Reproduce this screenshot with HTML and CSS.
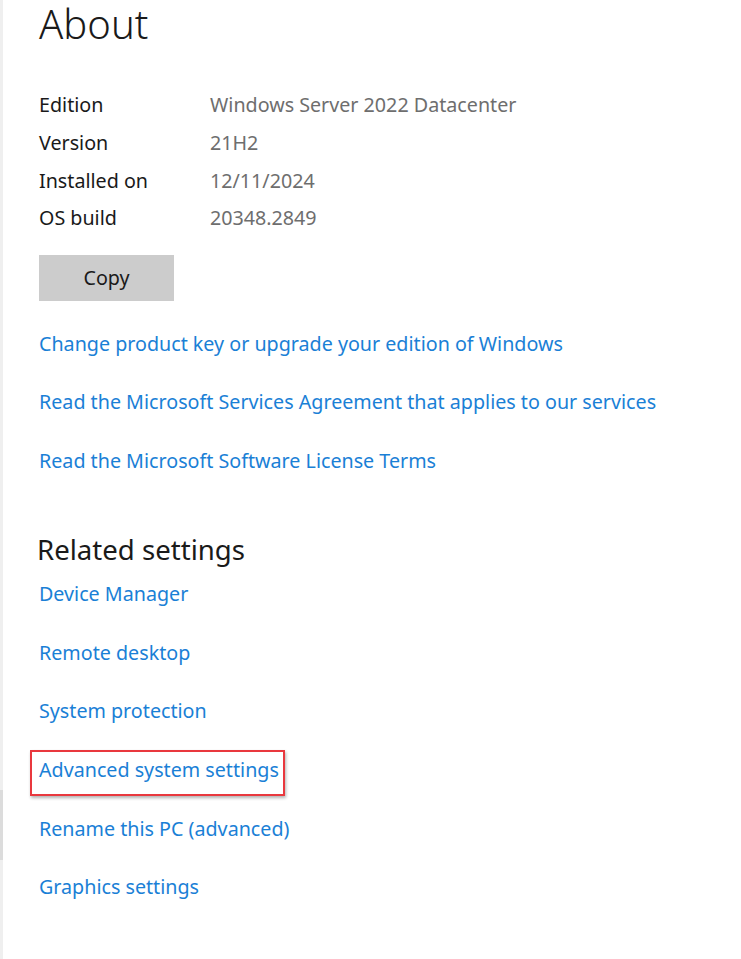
FILE: index.html
```html
<!DOCTYPE html>
<html lang="en">
<head>
<meta charset="utf-8">
<title>About</title>
<link rel="stylesheet" href="styles.css">
</head>
<body>
<div class="edge"><div class="edge-thumb"></div></div>
<main class="page">
  <h1 class="title">About</h1>
  <dl class="specs">
    <dt>Edition</dt><dd>Windows Server 2022 Datacenter</dd>
    <dt>Version</dt><dd>21H2</dd>
    <dt>Installed on</dt><dd>12/11/2024</dd>
    <dt>OS build</dt><dd>20348.2849</dd>
  </dl>
  <button class="copy">Copy</button>
  <ul class="links">
    <li><a href="#">Change product key or upgrade your edition of Windows</a></li>
    <li><a href="#">Read the Microsoft Services Agreement that applies to our services</a></li>
    <li><a href="#">Read the Microsoft Software License Terms</a></li>
  </ul>
  <h2 class="subtitle">Related settings</h2>
  <ul class="links related">
    <li><a href="#">Device Manager</a></li>
    <li><a href="#">Remote desktop</a></li>
    <li><a href="#">System protection</a></li>
    <li class="highlight"><a href="#">Advanced system settings</a></li>
    <li><a href="#">Rename this PC (advanced)</a></li>
    <li><a href="#">Graphics settings</a></li>
  </ul>
</main>
</body>
</html>
```

FILE: styles.css
```css
html, body {
  margin: 0;
  padding: 0;
  background: #ffffff;
}
body {
  font-family: "Noto Sans", "Open Sans", sans-serif;
  color: #1a1a1a;
  position: relative;
  min-height: 959px;
}
.edge {
  position: absolute;
  left: 0;
  top: 0;
  bottom: 0;
  width: 3px;
  background: #efefef;
}
.edge-thumb {
  margin-top: 790px;
  height: 70px;
  background: #dcdcdc;
}
.page {
  padding-left: 39px;
  padding-top: 0;
}
.title {
  margin: 0;
  font-size: 40px;
  font-weight: 300;
  line-height: 48px;
  color: #1a1a1a;
}
.specs {
  display: grid;
  grid-template-columns: 171px auto;
  grid-auto-rows: 37.7px;
  align-items: center;
  margin: 38px 0 0 0;
  font-size: 19.7px;
}
.specs dt {
  margin: 0;
  color: #1a1a1a;
}
.specs dd {
  margin: 0;
  color: #6e6e6e;
}
.copy {
  display: block;
  margin-top: 18px;
  width: 135px;
  height: 46px;
  border: none;
  background: #cccccc;
  font-family: inherit;
  font-size: 19.7px;
  color: #1a1a1a;
  padding: 0;
}
.links {
  list-style: none;
  margin: 14px 0 0 0;
  padding: 0;
  font-size: 19.7px;
}
.links li {
  line-height: 58.7px;
  height: 58.7px;
}
.links a {
  color: #1a80d6;
  text-decoration: none;
}
.subtitle {
  margin: 42px 0 0 -2px;
  font-size: 27.6px;
  font-weight: 400;
  line-height: 32px;
  color: #1a1a1a;
}
.related {
  margin-top: 0;
}
.highlight {
  position: relative;
}
.highlight::after {
  content: "";
  position: absolute;
  left: -9px;
  top: 9px;
  width: 251px;
  height: 42px;
  border: 2.5px solid #e9383e;
  box-shadow: 1px 2px 3px rgba(0, 0, 0, 0.3);
  pointer-events: none;
}
```
